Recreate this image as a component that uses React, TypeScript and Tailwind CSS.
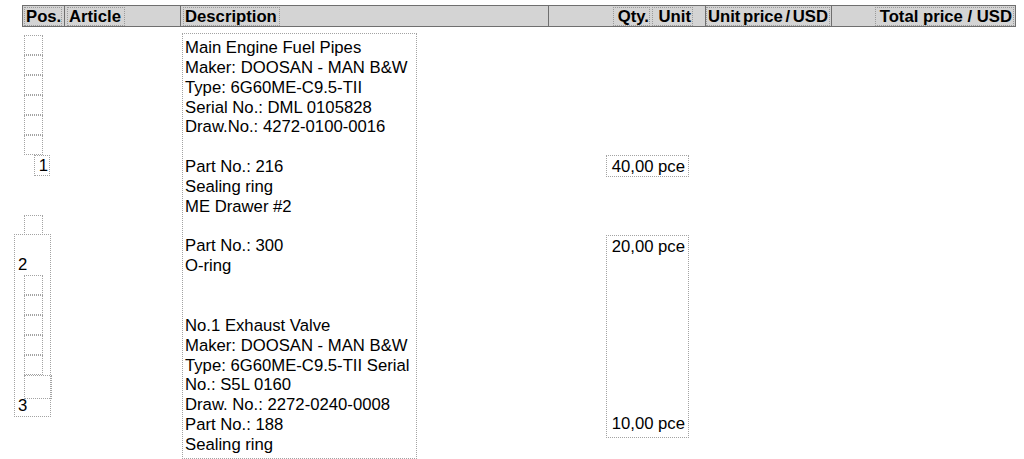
import React from 'react';

const font = { fontFamily: '"Liberation Sans", Arial, sans-serif' };

// description lines, '' = empty line
const descLines = [
  'Main Engine Fuel Pipes',
  'Maker: DOOSAN - MAN B&W',
  'Type: 6G60ME-C9.5-TII',
  'Serial No.: DML 0105828',
  'Draw.No.: 4272-0100-0016',
  '',
  'Part No.: 216',
  'Sealing ring',
  'ME Drawer #2',
  '',
  'Part No.: 300',
  'O-ring',
  '',
  '',
  'No.1 Exhaust Valve',
  'Maker: DOOSAN - MAN B&W',
  'Type: 6G60ME-C9.5-TII Serial',
  'No.: S5L 0160',
  'Draw. No.: 2272-0240-0008',
  'Part No.: 188',
  'Sealing ring',
];

function SmallBox({ wide }: { wide?: boolean }) {
  return (
    <div
      className={`${wide ? 'w-[28px] h-[24px]' : 'w-[19px] h-[20px]'} ml-[9px] border border-dotted border-[#a3a3a3]`}
    />
  );
}

export default function App() {
  return (
    <div className="w-[1024px] h-[459px] bg-white text-black overflow-hidden text-[16.7px]" style={font}>
      {/* Header */}
      <div className="mt-[5px] ml-[22px] w-[994px] h-[22px] flex border border-[#6f6f6f] bg-[#d4d4d4] font-bold">
        <div className="w-[41px] flex items-end">
          <div className="ml-[1px] w-[38px] h-[19px] border border-dotted border-[#9a9a9a] leading-[17px] pl-[1px]">Pos.</div>
        </div>
        <div className="w-[116px] border-l border-[#6f6f6f] flex items-end">
          <div className="ml-[2px] w-[58px] h-[19px] border border-dotted border-[#9a9a9a] leading-[17px] pl-[1px]">Article</div>
        </div>
        <div className="w-[368px] border-l border-[#6f6f6f] flex items-end">
          <div className="ml-[2px] w-[97px] h-[19px] border border-dotted border-[#9a9a9a] leading-[17px] pl-[1px]">Description</div>
        </div>
        <div className="w-[157px] border-l border-[#6f6f6f] flex items-end justify-end pr-[12px] gap-[2px]">
          <div className="w-[37px] h-[19px] border border-dotted border-[#9a9a9a] leading-[17px] text-right">Qty.</div>
          <div className="w-[41px] h-[19px] border border-dotted border-[#9a9a9a] leading-[17px] text-right pr-[1px]">Unit</div>
        </div>
        <div className="w-[126px] border-l border-[#6f6f6f] flex items-end">
          <div className="w-[124px] h-[19px] border border-dotted border-[#9a9a9a] leading-[17px] text-center whitespace-nowrap [word-spacing:-2px]">Unit price / USD</div>
        </div>
        <div className="flex-1 border-l border-[#6f6f6f] flex items-end justify-end pr-[1px]">
          <div className="w-[139px] h-[19px] border border-dotted border-[#9a9a9a] leading-[17px] text-right pr-[1px] whitespace-nowrap">Total price / USD</div>
        </div>
      </div>

      {/* Body */}
      <div className="flex">
        {/* Pos. column */}
        <div className="w-[182px] shrink-0 flex flex-col pt-[8px]">
          <div className="ml-[15px] flex flex-col">
            {[0, 1, 2, 3, 4, 5].map((i) => (
              <SmallBox key={i} />
            ))}
          </div>
          <div className="ml-[34px] w-[16px] h-[21px] border border-dotted border-[#a3a3a3] leading-[19px] text-right pr-[1px]">1</div>
          <div className="mt-[39px] ml-[15px]">
            <SmallBox />
          </div>
          <div className="-mt-px ml-[14px] w-[37px] h-[183px] border border-dotted border-[#a3a3a3] flex flex-col">
            <div className="mt-[20px] leading-[20px] pl-[3px]">2</div>
            {[0, 1, 2, 3, 4].map((i) => (
              <SmallBox key={i} />
            ))}
            <SmallBox wide />
            <div className="leading-[14px] pl-[3px]">3</div>
          </div>
        </div>

        {/* Description */}
        <div className="w-[235px] h-[426px] mt-[6px] shrink-0 border border-dotted border-[#a3a3a3] pt-[4px] pl-[2px] leading-[19.85px] whitespace-nowrap">
          {descLines.map((line, i) =>
            line ? <div key={i}>{line}</div> : <div key={i} className="h-[19.85px]" />
          )}
        </div>

        {/* Qty. column */}
        <div className="ml-[189px] w-[83px] shrink-0 flex flex-col">
          <div className="mt-[128px] h-[22px] border border-dotted border-[#a3a3a3] leading-[20px] pt-[1px] pr-[3px] text-right whitespace-nowrap">
            40,00 pce
          </div>
          <div className="mt-[58px] h-[203px] border border-dotted border-[#a3a3a3] flex flex-col justify-between leading-[20px] pt-[1px] pr-[3px] pb-[3px] text-right whitespace-nowrap">
            <div>20,00 pce</div>
            <div>10,00 pce</div>
          </div>
        </div>
      </div>
    </div>
  );
}
